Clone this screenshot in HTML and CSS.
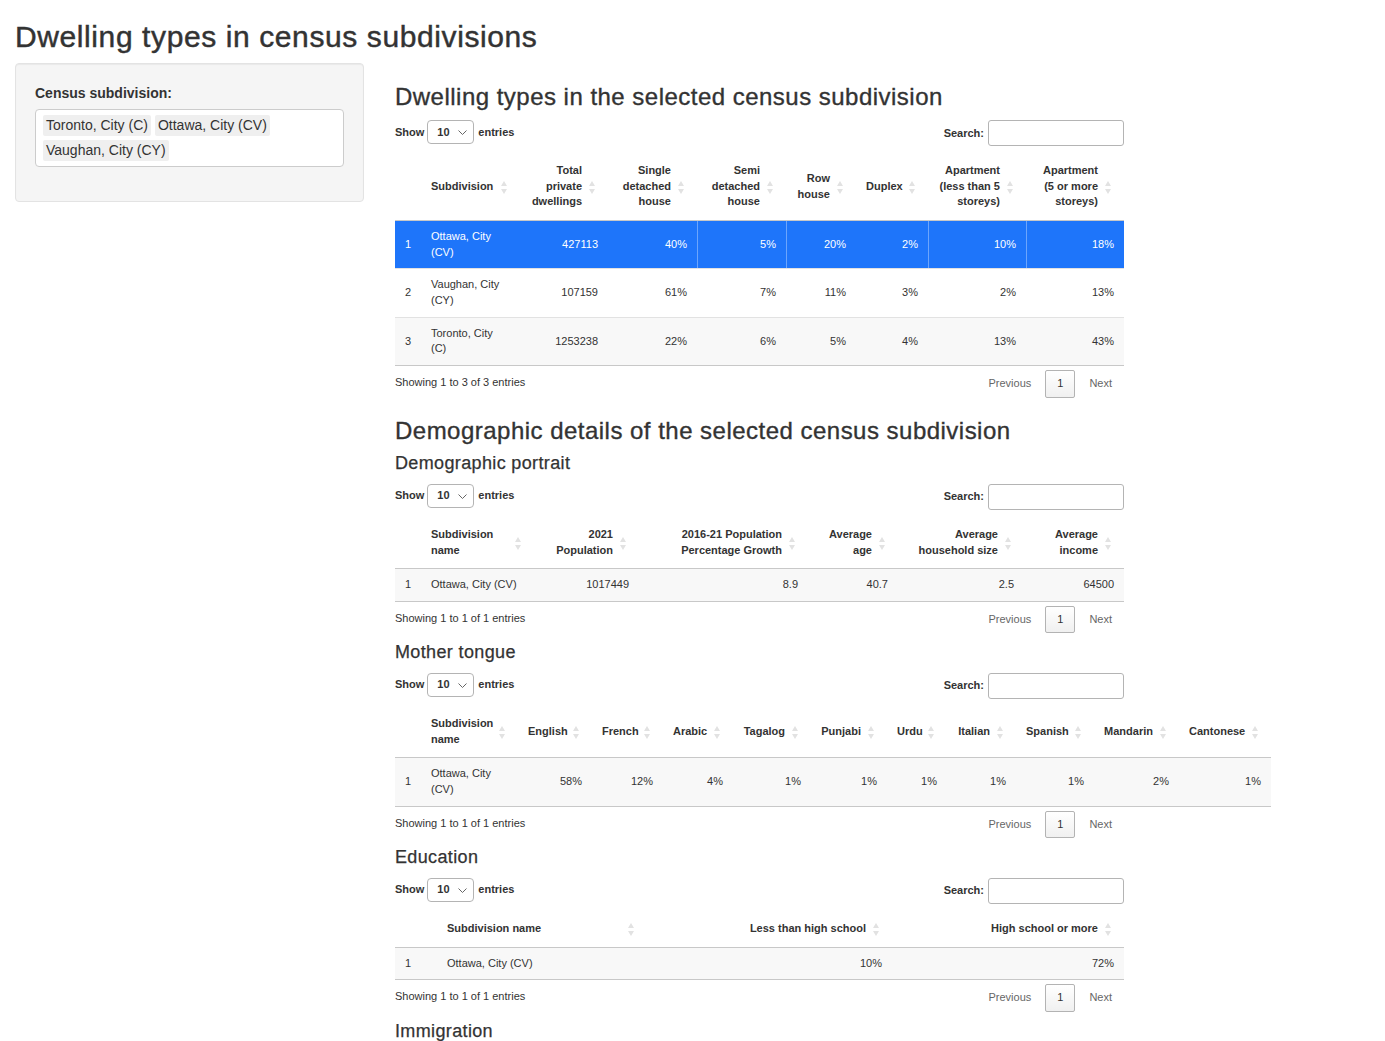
FILE: index.html
```html
<!DOCTYPE html>
<html lang="en">
<head>
<meta charset="utf-8">
<title>Dwelling types in census subdivisions</title>
<link rel="stylesheet" href="styles.css">
</head>
<body>
<div class="page">
  <h2 class="title">Dwelling types in census subdivisions</h2>
  <div class="layout">
    <aside class="sidebar">
      <div class="well">
        <div class="form-group">
          <label class="ctl-label">Census subdivision:</label>
          <div class="selectize">
            <span class="chip">Toronto, City (C)</span><span class="chip">Ottawa, City (CV)</span><span class="chip">Vaughan, City (CY)</span>
          </div>
        </div>
      </div>
    </aside>

    <main class="main">
      <h3 class="first">Dwelling types in the selected census subdivision</h3>
      <div class="dt-wrap">
        <div class="dt-controls">
          <div class="dt-length">Show <span class="sel-box"><span>10</span><svg width="9" height="5" viewBox="0 0 9 5"><path d="M0.5 0.5 L4.5 4.5 L8.5 0.5" stroke="#666" stroke-width="1" fill="none"/></svg></span> entries</div>
          <div class="dt-filter">Search: <span class="search-box"></span></div>
        </div>
        <table class="dt t1">
          <colgroup><col><col><col><col><col><col><col><col><col></colgroup>
          <thead>
            <tr>
              <th></th>
              <th class="s">Subdivision</th>
              <th class="s r">Total private dwellings</th>
              <th class="s r">Single detached house</th>
              <th class="s r">Semi detached house</th>
              <th class="s r">Row house</th>
              <th class="s r">Duplex</th>
              <th class="s r">Apartment (less than 5 storeys)</th>
              <th class="s r">Apartment (5 or more storeys)</th>
            </tr>
          </thead>
          <tbody>
            <tr class="selected">
              <td>1</td><td>Ottawa, City (CV)</td><td class="r">427113</td><td class="r">40%</td><td class="r bl">5%</td><td class="r bl">20%</td><td class="r">2%</td><td class="r bl">10%</td><td class="r bl">18%</td>
            </tr>
            <tr>
              <td>2</td><td>Vaughan, City (CY)</td><td class="r">107159</td><td class="r">61%</td><td class="r">7%</td><td class="r">11%</td><td class="r">3%</td><td class="r">2%</td><td class="r">13%</td>
            </tr>
            <tr class="odd">
              <td>3</td><td>Toronto, City (C)</td><td class="r">1253238</td><td class="r">22%</td><td class="r">6%</td><td class="r">5%</td><td class="r">4%</td><td class="r">13%</td><td class="r">43%</td>
            </tr>
          </tbody>
        </table>
        <div class="dt-footer">
          <div class="dt-info">Showing 1 to 3 of 3 entries</div>
          <div class="dt-paginate"><span class="pg disabled">Previous</span><span class="pg current">1</span><span class="pg disabled">Next</span></div>
        </div>
      </div>

      <h3>Demographic details of the selected census subdivision</h3>
      <h4>Demographic portrait</h4>
      <div class="dt-wrap">
        <div class="dt-controls">
          <div class="dt-length">Show <span class="sel-box"><span>10</span><svg width="9" height="5" viewBox="0 0 9 5"><path d="M0.5 0.5 L4.5 4.5 L8.5 0.5" stroke="#666" stroke-width="1" fill="none"/></svg></span> entries</div>
          <div class="dt-filter">Search: <span class="search-box"></span></div>
        </div>
        <table class="dt t2">
          <colgroup><col><col><col><col><col><col><col></colgroup>
          <thead>
            <tr>
              <th></th>
              <th class="s">Subdivision name</th>
              <th class="s r">2021 Population</th>
              <th class="s r">2016-21 Population Percentage Growth</th>
              <th class="s r">Average age</th>
              <th class="s r">Average household size</th>
              <th class="s r">Average income</th>
            </tr>
          </thead>
          <tbody>
            <tr class="odd">
              <td>1</td><td>Ottawa, City (CV)</td><td class="r">1017449</td><td class="r">8.9</td><td class="r">40.7</td><td class="r">2.5</td><td class="r">64500</td>
            </tr>
          </tbody>
        </table>
        <div class="dt-footer">
          <div class="dt-info">Showing 1 to 1 of 1 entries</div>
          <div class="dt-paginate"><span class="pg disabled">Previous</span><span class="pg current">1</span><span class="pg disabled">Next</span></div>
        </div>
      </div>

      <h4>Mother tongue</h4>
      <div class="dt-wrap">
        <div class="dt-controls">
          <div class="dt-length">Show <span class="sel-box"><span>10</span><svg width="9" height="5" viewBox="0 0 9 5"><path d="M0.5 0.5 L4.5 4.5 L8.5 0.5" stroke="#666" stroke-width="1" fill="none"/></svg></span> entries</div>
          <div class="dt-filter">Search: <span class="search-box"></span></div>
        </div>
        <table class="dt t3">
          <colgroup><col><col><col><col><col><col><col><col><col><col><col><col></colgroup>
          <thead>
            <tr>
              <th></th>
              <th class="s">Subdivision name</th>
              <th class="s r">English</th>
              <th class="s r">French</th>
              <th class="s r">Arabic</th>
              <th class="s r">Tagalog</th>
              <th class="s r">Punjabi</th>
              <th class="s r">Urdu</th>
              <th class="s r">Italian</th>
              <th class="s r">Spanish</th>
              <th class="s r">Mandarin</th>
              <th class="s r">Cantonese</th>
            </tr>
          </thead>
          <tbody>
            <tr class="odd">
              <td>1</td><td>Ottawa, City (CV)</td><td class="r">58%</td><td class="r">12%</td><td class="r">4%</td><td class="r">1%</td><td class="r">1%</td><td class="r">1%</td><td class="r">1%</td><td class="r">1%</td><td class="r">2%</td><td class="r">1%</td>
            </tr>
          </tbody>
        </table>
        <div class="dt-footer">
          <div class="dt-info">Showing 1 to 1 of 1 entries</div>
          <div class="dt-paginate"><span class="pg disabled">Previous</span><span class="pg current">1</span><span class="pg disabled">Next</span></div>
        </div>
      </div>

      <h4>Education</h4>
      <div class="dt-wrap">
        <div class="dt-controls">
          <div class="dt-length">Show <span class="sel-box"><span>10</span><svg width="9" height="5" viewBox="0 0 9 5"><path d="M0.5 0.5 L4.5 4.5 L8.5 0.5" stroke="#666" stroke-width="1" fill="none"/></svg></span> entries</div>
          <div class="dt-filter">Search: <span class="search-box"></span></div>
        </div>
        <table class="dt t4">
          <colgroup><col><col><col><col></colgroup>
          <thead>
            <tr>
              <th></th>
              <th class="s">Subdivision name</th>
              <th class="s r">Less than high school</th>
              <th class="s r">High school or more</th>
            </tr>
          </thead>
          <tbody>
            <tr class="odd">
              <td>1</td><td>Ottawa, City (CV)</td><td class="r">10%</td><td class="r">72%</td>
            </tr>
          </tbody>
        </table>
        <div class="dt-footer">
          <div class="dt-info">Showing 1 to 1 of 1 entries</div>
          <div class="dt-paginate"><span class="pg disabled">Previous</span><span class="pg current">1</span><span class="pg disabled">Next</span></div>
        </div>
      </div>

      <h4>Immigration</h4>
    </main>
  </div>
</div>
</body>
</html>
```

FILE: styles.css
```css
* { box-sizing: border-box; }

html, body {
  margin: 0;
  padding: 0;
  background: #fff;
}

body {
  font-family: "Liberation Sans", Arial, Helvetica, sans-serif;
  font-size: 14px;
  line-height: 1.42857;
  color: #333;
}

.page {
  padding: 0 15px;
}

h2, h3, h4 {
  font-weight: 500;
  line-height: 1.1;
  color: #333;
  letter-spacing: 0.02em;
}

.title {
  font-size: 30px;
  margin: 20px 0 10px;
  -webkit-text-stroke: 0.45px #333;
}

h3 {
  font-size: 24px;
  margin: 20px 0 10px;
  -webkit-text-stroke: 0.35px #333;
}

h3.first {
  margin-top: 21px;
}

h4 {
  font-size: 18px;
  margin: 10px 0 10px;
  -webkit-text-stroke: 0.25px #333;
}

.layout {
  display: flex;
  align-items: flex-start;
  gap: 31px;
}

.sidebar {
  width: 349px;
  flex: 0 0 349px;
}

.well {
  background: #f5f5f5;
  border: 1px solid #e3e3e3;
  border-radius: 4px;
  box-shadow: inset 0 1px 1px rgba(0, 0, 0, 0.05);
  padding: 20px 19px 19px;
}

.form-group {
  margin-bottom: 15px;
}

.ctl-label {
  display: block;
  font-weight: bold;
  font-size: 14px;
  margin-bottom: 5px;
}

.selectize {
  background: #fff;
  border: 1px solid #ccc;
  border-radius: 4px;
  padding: 5px 7px 1px;
  display: flex;
  flex-wrap: wrap;
}

.chip {
  display: inline-block;
  background: #efefef;
  color: #333;
  font-size: 14px;
  line-height: 19px;
  padding: 1px 3px;
  margin: 0 4px 4px 0;
  border-radius: 2px;
}

.main {
  flex: 0 0 729px;
  width: 729px;
}

.dt-wrap {
  font-size: 11px;
  line-height: 15.7px;
}

.dt-controls {
  display: flex;
  justify-content: space-between;
  align-items: flex-start;
  width: 729px;
  height: 26px;
  font-weight: bold;
}

.dt-length {
  display: flex;
  align-items: center;
  gap: 3px;
  height: 24px;
}

.sel-box {
  display: inline-flex;
  align-items: center;
  justify-content: space-between;
  width: 47px;
  height: 24px;
  border: 1px solid #b4b4b4;
  border-radius: 4px;
  padding: 0 6px 0 9px;
  font-weight: bold;
  margin-right: 1px;
  background: #fff;
}

.dt-filter {
  display: flex;
  align-items: center;
  gap: 4px;
  height: 26px;
}

.search-box {
  display: inline-block;
  width: 136px;
  height: 26px;
  border: 1px solid #b4b4b4;
  border-radius: 3px;
  background: #fff;
}

table.dt {
  table-layout: fixed;
  border-collapse: separate;
  border-spacing: 0;
  margin-top: 7px;
  width: 729px;
}

table.dt th {
  position: relative;
  font-weight: bold;
  text-align: left;
  vertical-align: middle;
  padding: 10px 10px;
  border-bottom: 1px solid #c8c8c8;
  line-height: 15.5px;
}

table.dt th.s {
  padding-right: 26px;
}

table.dt th.r,
table.dt td.r {
  text-align: right;
}

table.dt th.s::before,
table.dt th.s::after {
  content: "";
  position: absolute;
  right: 13px;
  width: 0;
  height: 0;
  border-left: 3px solid transparent;
  border-right: 3px solid transparent;
}

table.dt th.s::before {
  top: calc(50% - 6px);
  border-bottom: 5px solid #e2e2e2;
}

table.dt th.s::after {
  top: calc(50% + 2px);
  border-top: 5px solid #e2e2e2;
}

table.dt td {
  padding: 8px 10px;
  vertical-align: middle;
  border-top: 1px solid #e2e2e2;
  line-height: 15.7px;
}

table.dt tbody tr:first-child td {
  border-top: none;
}

table.dt tbody tr:last-child td {
  border-bottom: 1px solid #c8c8c8;
}

table.dt tr.odd td {
  background: #f8f8f8;
}

table.dt tr.selected td {
  background: #1e75fa;
  color: #fff;
}

table.dt tr.selected td.bl {
  border-left: 1px solid rgba(255, 255, 255, 0.35);
}

/* column widths */
.t1 col:nth-child(1) { width: 26px; }
.t1 col:nth-child(2) { width: 99px; }
.t1 col:nth-child(3) { width: 88px; }
.t1 col:nth-child(4) { width: 89px; }
.t1 col:nth-child(5) { width: 89px; }
.t1 col:nth-child(6) { width: 70px; }
.t1 col:nth-child(7) { width: 72px; }
.t1 col:nth-child(8) { width: 98px; }
.t1 col:nth-child(9) { width: 98px; }

.t2 col:nth-child(1) { width: 26px; }
.t2 col:nth-child(2) { width: 113px; }
.t2 col:nth-child(3) { width: 105px; }
.t2 col:nth-child(4) { width: 169px; }
.t2 col:nth-child(5) { width: 90px; }
.t2 col:nth-child(6) { width: 126px; }
.t2 col:nth-child(7) { width: 100px; }

table.t3 { width: 876px; }
.t3 col:nth-child(1) { width: 26px; }
.t3 col:nth-child(2) { width: 97px; }
.t3 col:nth-child(3) { width: 74px; }
.t3 col:nth-child(4) { width: 71px; }
.t3 col:nth-child(5) { width: 70px; }
.t3 col:nth-child(6) { width: 78px; }
.t3 col:nth-child(7) { width: 76px; }
.t3 col:nth-child(8) { width: 60px; }
.t3 col:nth-child(9) { width: 69px; }
.t3 col:nth-child(10) { width: 78px; }
.t3 col:nth-child(11) { width: 85px; }
.t3 col:nth-child(12) { width: 92px; }

.t4 col:nth-child(1) { width: 42px; }
.t4 col:nth-child(2) { width: 210px; }
.t4 col:nth-child(3) { width: 245px; }
.t4 col:nth-child(4) { width: 232px; }

.dt-footer {
  display: flex;
  justify-content: space-between;
  align-items: flex-start;
  width: 729px;
}

.dt-info {
  padding-top: 9px;
}

.dt-paginate {
  display: flex;
  padding-top: 4px;
}

.pg {
  display: inline-block;
  padding: 5px 11px;
  margin-left: 2px;
  border: 1px solid transparent;
  border-radius: 2px;
  color: #333;
}

.pg.disabled {
  color: #666;
}

.pg.current {
  border: 1px solid #b3b3b3;
  background: linear-gradient(to bottom, #ffffff 0%, #f0f0f0 100%);
  color: #333;
}
```
